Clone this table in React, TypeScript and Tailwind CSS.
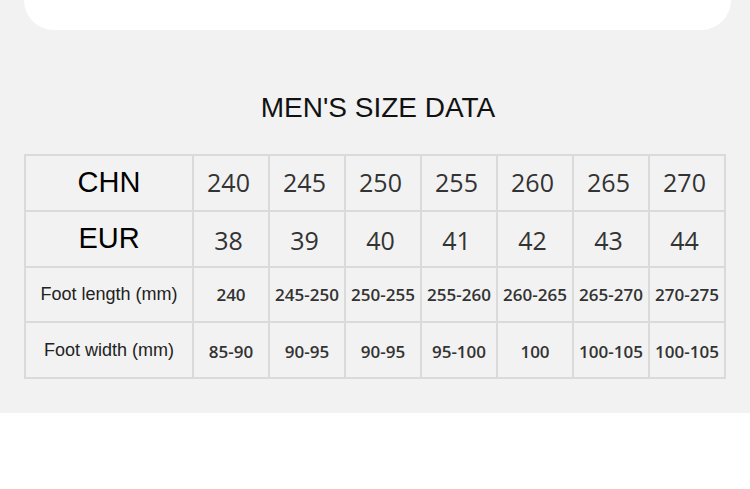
const CHN = ["240", "245", "250", "255", "260", "265", "270"];
const EUR = ["38", "39", "40", "41", "42", "43", "44"];
const LENGTH = ["240", "245-250", "250-255", "255-260", "260-265", "265-270", "270-275"];
const WIDTH = ["85-90", "90-95", "90-95", "95-100", "100", "100-105", "100-105"];

const cell = "border-2 border-[#dadada] text-center align-middle p-0";

export default function App() {
  return (
    <div className="min-h-[489px] w-[750px] bg-white">
      <section className="h-[413px] bg-[#f2f2f2] pt-0">
        <div className="ml-[24px] h-[30px] w-[707px] rounded-b-[36px] bg-white" />

        <h1 className="mt-[62px] pl-[6px] text-center font-['Liberation_Sans',Arial,sans-serif] text-[28px] leading-[32px] text-[#111]">
          MEN'S SIZE DATA
        </h1>

        <table className="ml-[24px] mt-[30px] w-[702px] table-fixed border-collapse">
          <colgroup>
            <col className="w-[168px]" />
            {CHN.map((v) => (
              <col key={v} />
            ))}
          </colgroup>
          <tbody>
            <tr className="h-[56px]">
              <td className={`${cell} font-['Liberation_Sans',Arial,sans-serif] text-[29px] text-black`}>CHN</td>
              {CHN.map((v) => (
                <td key={v} className={`${cell} pr-[5px] font-['Open_Sans',sans-serif] text-[25px] text-[#333]`}>
                  {v}
                </td>
              ))}
            </tr>
            <tr className="h-[56px]">
              <td className={`${cell} font-['Liberation_Sans',Arial,sans-serif] text-[29px] text-black`}>EUR</td>
              {EUR.map((v) => (
                <td key={v} className={`${cell} pr-[5px] pt-[3px] font-['Open_Sans',sans-serif] text-[25px] text-[#333]`}>
                  {v}
                </td>
              ))}
            </tr>
            <tr className="h-[55px]">
              <td className={`${cell} font-['Liberation_Sans',Arial,sans-serif] text-[18px] text-[#222]`}>
                Foot length (mm)
              </td>
              {LENGTH.map((v, i) => (
                <td key={i} className={`${cell} font-['Open_Sans',sans-serif] text-[17px] font-semibold text-[#333]`}>
                  {v}
                </td>
              ))}
            </tr>
            <tr className="h-[56px]">
              <td className={`${cell} font-['Liberation_Sans',Arial,sans-serif] text-[18px] text-[#222]`}>
                Foot width (mm)
              </td>
              {WIDTH.map((v, i) => (
                <td key={i} className={`${cell} pt-[4px] font-['Open_Sans',sans-serif] text-[17px] font-semibold text-[#333]`}>
                  {v}
                </td>
              ))}
            </tr>
          </tbody>
        </table>
      </section>
    </div>
  );
}
